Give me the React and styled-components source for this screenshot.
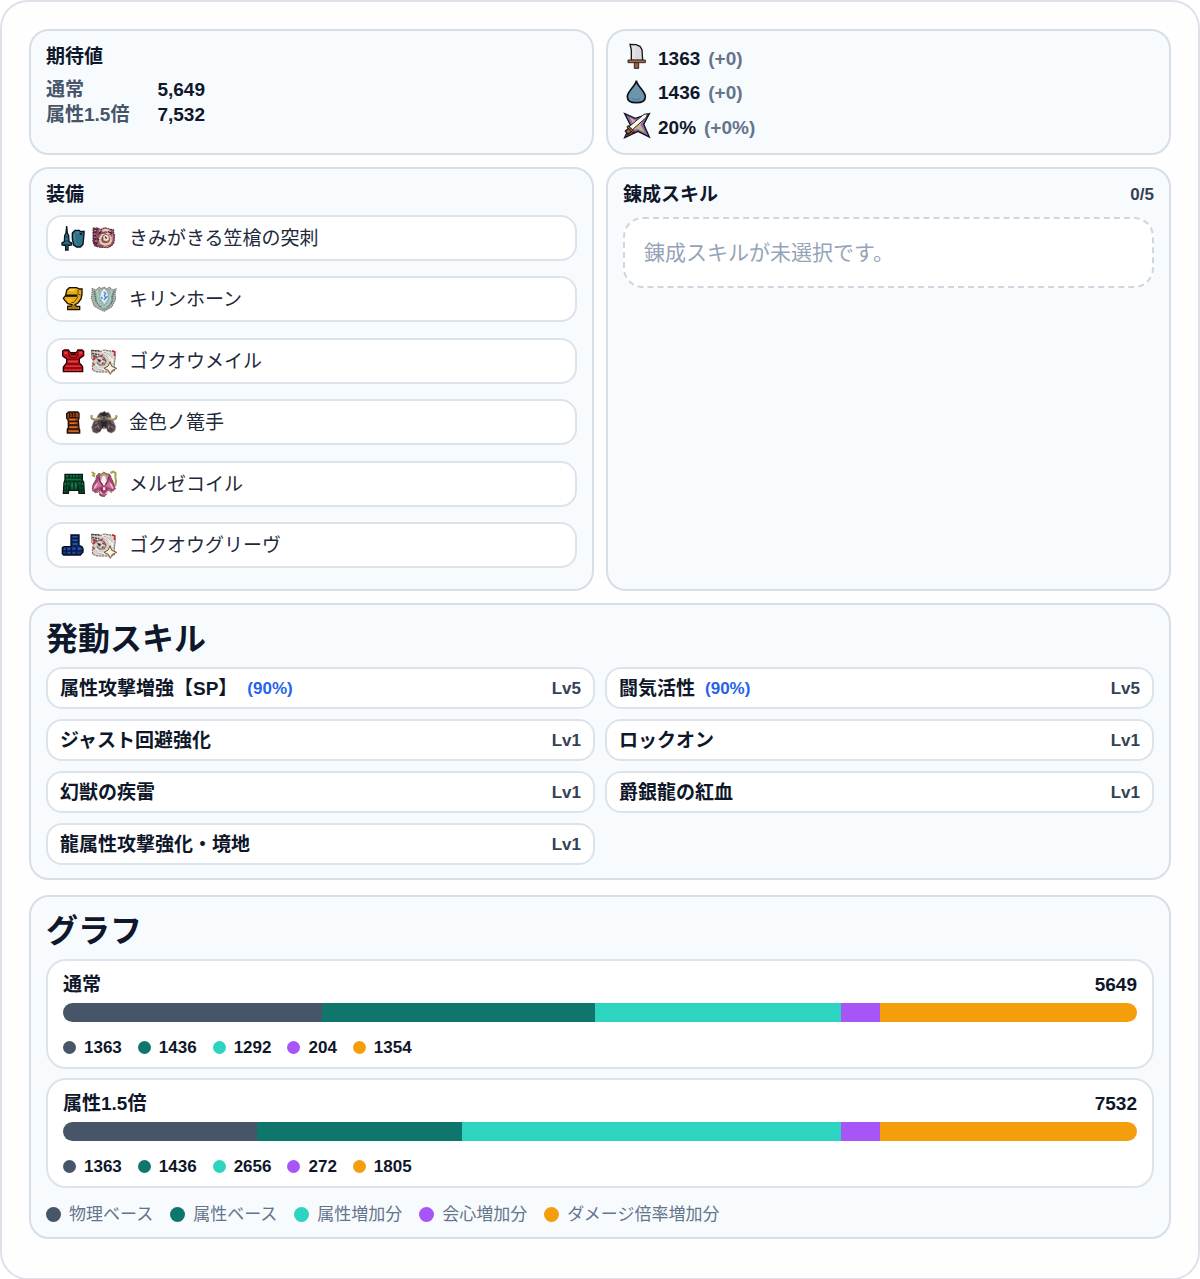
import React from 'react';
import styled, { createGlobalStyle } from 'styled-components';

const GlobalStyle = createGlobalStyle`
  * {
    box-sizing: border-box;
  }
  body {
    margin: 0;
    background: #fff;
    color: #0f172a;
    font-family: 'Liberation Sans', 'Noto Sans CJK JP', sans-serif;
    font-size: 19px;
    line-height: 25px;
  }
  h2, h3, ul, dl, dd, p {
    margin: 0;
    padding: 0;
  }
  ul {
    list-style: none;
  }
`;

const Root = styled.main`
  display: flex;
  flex-direction: column;
  gap: 12px;
  padding: 27px 27px 39px;
  border: 2px solid #dce2ea;
  border-radius: 28px;
  background: #fefeff;
`;

const Columns = styled.div`
  display: grid;
  grid-template-columns: 1fr 1fr;
  gap: 12px;
`;

const Panel = styled.section`
  padding: 13px 15px;
  border: 2px solid #d7dee8;
  border-radius: 20px;
  background: #f8fbfe;
`;

const GraphPanel = styled(Panel)`
  margin-top: 3px;
  padding-bottom: 10px;
`;

const PanelHeader = styled.div`
  display: flex;
  justify-content: space-between;
  align-items: center;
  margin-bottom: ${props => props.$gap || 8}px;
`;

const PanelTitle = styled.h3`
  font-size: 19px;
  line-height: 25px;
  font-weight: 700;
`;

const SectionTitle = styled.h2`
  margin-bottom: 7px;
  font-size: 32px;
  line-height: 42px;
  font-weight: 700;
`;

const Count = styled.span`
  font-size: 17px;
  font-weight: 700;
  color: #334155;
`;

const ExpectedList = styled.dl`
  display: grid;
  grid-template-columns: auto 1fr;
  column-gap: 28px;
  font-weight: 700;
  dt {
    color: #475569;
  }
`;

const StatList = styled.ul`
  display: flex;
  flex-direction: column;
  justify-content: space-between;
  min-height: 95px;
  margin-top: 1px;
`;

const StatRow = styled.li`
  display: flex;
  align-items: center;
  gap: 8px;
  font-weight: 700;
`;

const StatValue = styled.span`
  margin-left: 1px;
`;

const Diff = styled.span`
  color: #64748b;
`;

const Icon = styled.svg`
  flex: none;
  width: 26px;
  height: 26px;
  overflow: visible;
`;

const EquipList = styled.ul`
  display: flex;
  flex-direction: column;
  justify-content: space-between;
  min-height: 353px;
  margin-bottom: 8px;
`;

const EquipItem = styled.li`
  display: flex;
  align-items: center;
  gap: 5px;
  height: 46px;
  padding: 0 12px;
  border: 2px solid #dde3eb;
  border-radius: 16px;
  background: #fff;
  color: #1e293b;
`;

const EquipName = styled.span`
  margin-top: 1px;
  margin-left: 7px;
`;

const Empty = styled.p`
  padding: 21px 19px;
  border: 2px dashed #cfd6e0;
  border-radius: 20px;
  background: #fff;
  color: #94a3b8;
  font-size: 21px;
`;

const SkillGrid = styled.ul`
  display: grid;
  grid-template-columns: 1fr 1fr;
  gap: 10px;
`;

const SkillItem = styled.li`
  display: flex;
  align-items: center;
  height: 42px;
  padding: 0 12px;
  border: 2px solid #dde3eb;
  border-radius: 16px;
  background: #fff;
  font-weight: 700;
`;

const Rate = styled.span`
  margin-left: 10px;
  font-size: 17px;
  color: #2563eb;
`;

const Level = styled.span`
  margin-left: auto;
  font-size: 17px;
  color: #334155;
`;

const Cards = styled.div`
  display: flex;
  flex-direction: column;
  gap: 9px;
`;

const Card = styled.div`
  height: 110px;
  padding: 11px 15px;
  border: 2px solid #dde3eb;
  border-radius: 20px;
  background: #fff;
  font-weight: 700;
`;

const CardHeader = styled.div`
  display: flex;
  justify-content: space-between;
  margin-bottom: 6px;
`;

const Bar = styled.div`
  display: flex;
  height: 19px;
  margin-bottom: 13px;
  border-radius: 10px;
  overflow: hidden;
`;

const Segment = styled.div`
  background: ${props => props.$color};
`;

const Values = styled.ul`
  display: flex;
  gap: 16px;
  font-size: 17px;
`;

const Legend = styled(Values)`
  gap: 17px;
  margin-top: 14px;
  color: #64748b;
`;

const Entry = styled.li`
  display: flex;
  align-items: center;
  gap: 8px;
`;

const Dot = styled.span`
  width: ${props => props.$size}px;
  height: ${props => props.$size}px;
  border-radius: 50%;
  background: ${props => props.$color};
`;

const SwordIcon = () => (
  <Icon viewBox="69 79 78 78">
    <path d="M90 77l18 1 12 5 6 10 2 32H94V94z" fill="#d9dadd" stroke="#17171c" strokeWidth="4" />
    <path d="M97 82h10l-3 38h-7z" fill="#e4e4e6" />
    <path d="M103 131h13v18h-13z" fill="#936044" stroke="#38231a" strokeWidth="3" />
    <path d="M84 124h52v8H84z" fill="#a66b48" stroke="#38231a" strokeWidth="3" />
  </Icon>
);

const DropIcon = () => (
  <Icon viewBox="69 181 78 78">
    <path d="M109 183c2 16 27 32 27 48 0 13-13 18-27 18s-27-5-27-18c0-16 25-32 27-48z" fill="#6d95ae" stroke="#0d1218" strokeWidth="5" />
    <path d="M94 233q14 12 28-1l-3 7q-12 6-23-1z" fill="#4b7ba0" />
  </Icon>
);

const AffinityIcon = () => (
  <Icon viewBox="69 285 78 78">
    <path d="M74 284l32 14 42-14-17 32 17 38-34-17-40 19 17-38z" fill="#8b6ab2" stroke="#15131a" strokeWidth="4" />
    <path d="M89 295l20 11 25-10-13 21 14 24-23-12-22 6 10-19z" fill="#c9b579" />
    <path d="M86 324l46-38 11-2-5 12-43 38z" fill="#faf8f3" stroke="#24202a" strokeWidth="3" />
    <path d="M76 336l12-10 9 10-13 10z" fill="#a76b3a" stroke="#2a1910" strokeWidth="4" />
    <path d="M82 321l20 20" stroke="#2a1910" strokeWidth="8" />
    <path d="M84 323l16 16" stroke="#cf9c60" strokeWidth="3" />
  </Icon>
);

const LanceIcon = () => (
  <Icon viewBox="30 30 78 78">
    <path d="M50 33l2 21 4 8 1 18 8 4v6l-11 2v13h-7V92l-11-2v-6l7-4 1-18 4-8z" fill="#2e7289" stroke="#07131a" strokeWidth="4" />
    <path d="M44 78h14M46 66h9M38 88h25" stroke="#123b4c" strokeWidth="3" />
    <path d="M67 54l8-8h13l4 4 10-1v8l-3 31-8 8H80l-9-6-4-18z" fill="#2f7189" stroke="#07131a" strokeWidth="4" />
    <path d="M73 57l2 25 7 9M79 53h8" fill="none" stroke="#4b8ba1" strokeWidth="3" />
    <path d="M89 53l8 8M97 53l-8 7" stroke="#07131a" strokeWidth="3" />
  </Icon>
);

const HelmIcon = () => (
  <Icon viewBox="30 36 78 78">
    <path d="M50 49l8-8h22l8 4h8v16l-3 14-9 12-9 5 4 5h10v10H53V97l11-1 2-4-13-3-8-9-5-7 7-9z" fill="#e9aa17" stroke="#171104" strokeWidth="4" />
    <path d="M53 51l8-6h16l-6 6z" fill="#ffd04a" />
    <path d="M46 65h36" stroke="#171104" strokeWidth="7" />
    <path d="M84 48v13l8 2M84 68l-12 17-8 1" fill="none" stroke="#6d4a05" strokeWidth="3" />
    <path d="M50 75h18l-5 8h-6z" fill="#f8bc22" />
    <path d="M61 96h17M57 102h28" stroke="#704905" strokeWidth="3" />
  </Icon>
);

const MailIcon = () => (
  <Icon viewBox="30 33 78 78">
    <path d="M38 42l5-3h12l6 8h18l5-8h12l5 4v13l-9 6-4 3v13l6 6 4 6v14H40V90l5-6 5-6V65l-5-3-7-5z" fill="#cc151d" stroke="#290506" strokeWidth="4" />
    <path d="M57 42v15l6 5h14l6-5V42M50 67h38M49 81h41M42 93h55" fill="none" stroke="#720a0e" strokeWidth="4" />
    <path d="M62 52h16" stroke="#290506" strokeWidth="5" />
    <path d="M43 45h9v6h-9zM88 45h8v6h-8zM54 71h30v5H54zM48 86h42v3H48z" fill="#ee3c40" />
    <path d="M45 99h48" stroke="#ee3c40" strokeWidth="3" strokeDasharray="8 3" />
  </Icon>
);

const GauntletIcon = () => (
  <Icon viewBox="30 31 78 78">
    <path d="M50 45l6-5h27l4 4v15l-2 5 2 26 2 3v10H52V91l3-2V66l-5-8z" fill="#9c4317" stroke="#211008" strokeWidth="4" />
    <path d="M59 41v13M67 41v13M75 41v13M55 57h30M56 68h28M56 79h28M54 91h33" stroke="#2a140b" strokeWidth="4" />
    <path d="M58 61h18v4H58zM60 72h17v4H60zM58 84h22v4H58zM57 96h27v3H57z" fill="#dd722a" />
  </Icon>
);

const CoilIcon = () => (
  <Icon viewBox="30 33 78 78">
    <path d="M45 43h52v18l4 5 2 34H87l-2-22-2 13H60l-2-13-3 22H40l2-32 3-8z" fill="#0b5733" stroke="#071a12" strokeWidth="4" />
    <path d="M58 45v17M67 45v16M76 45v16M86 45v17M47 53h48M46 64h50M60 66v24M72 66v24M83 66v24M43 78h14M41 90h15M86 78h15M87 90h15M49 66v33M94 66v33" stroke="#082c1b" strokeWidth="3" />
    <path d="M49 46h5v4h-5zM61 46h4v4h-4zM70 46h4v4h-4zM80 46h4v4h-4zM50 58h42v2H50zM43 70h5v5h-5zM96 70h4v5h-4zM64 70h5v12h-5zM75 70h5v12h-5z" fill="#13804a" />
  </Icon>
);

const GreavesIcon = () => (
  <Icon viewBox="30 37 78 78">
    <path d="M63 46h24v31l9 4 3 6v10l-8 9H41l-4-4V84l5-3 21-1z" fill="#15357c" stroke="#050b1e" strokeWidth="4" />
    <path d="M65 56h20M65 67h20M65 79l18 1M49 83v21M64 83v21M79 82v22M39 94h57" fill="none" stroke="#06143b" strokeWidth="3" />
    <path d="M69 50h12v3H69zM70 60h11v4H70zM70 71h11v4H70zM42 85h4v6h-4zM53 85h7v5h-7zM68 84h7v5h-7zM84 84h8v6h-8zM53 98h7v3h-7zM69 98h6v3h-6z" fill="#2c5cb0" />
  </Icon>
);

const BeastIcon = () => (
  <Icon viewBox="123 30 78 78">
    <path d="M129 39h17l4 5 14-6 14 4 13 2v10l3 7-2 22-7 10-12 5-24-1-15-4-5-11z" fill="#8d5262" stroke="#4c2638" strokeWidth="3" strokeDasharray="6 2" />
    <path d="M131 41h13l-6 18 1 22 10 12-13-2-6-11z" fill="#552343" />
    <path d="M157 48q14-7 22 3l-9 8-14 2-7 11 4 12 12 5 14-4 6-12-6-9-9-1" fill="none" stroke="#edc9ad" strokeWidth="7" />
    <path d="M159 62l9-4 9 5 1 11-7 6-12-3z" fill="#f2e1d4" stroke="#6c3041" strokeWidth="2" />
    <path d="M132 47h7M132 57h5M132 67h5M134 78h6M142 90l8-4M150 43l-2 9M187 58v17M161 95l14-1" stroke="#c87f86" strokeWidth="4" />
    <path d="M146 56l7-6M174 50l12 5M165 65l5 6M141 70l6 5" stroke="#3e1734" strokeWidth="4" />
  </Icon>
);

const KirinIcon = () => (
  <Icon viewBox="123 36 78 78">
    <path d="M126 43l12 5 8-8 9 3 7-4 8 5 9-5 7 9 13-4-4 15 2 17-11 22-16 10-8 4-15-7-15-9-8-23 2-15z" fill="#a4b5ae" stroke="#706b62" strokeWidth="3" strokeDasharray="4 2" />
    <path d="M133 51l3 18 2 11 10 15 14 10M192 51l-6 18 1 13-10 13-13 10" fill="none" stroke="#596d69" strokeWidth="5" strokeDasharray="5 2" />
    <path d="M140 49l5 16-3 15 18 23M187 49l-7 18 2 12-17 24" fill="none" stroke="#a4d5cb" strokeWidth="5" strokeDasharray="9 2" />
    <path d="M162 42l11 13 3 17-13 20-14-20 3-17z" fill="#e8eef0" stroke="#7ba8bc" strokeWidth="3" strokeDasharray="6 2" />
    <path d="M161 54l6 4-4 6 4 8-5 6M153 69l5 5M173 67l-5 5" fill="none" stroke="#3e8dd2" strokeWidth="4" />
    <path d="M144 43l7 12M180 43l-8 10M127 67l8 6M196 70l-9 8M142 91l14 5M182 90l-12 8" stroke="#bb9f8c" strokeWidth="3" />
  </Icon>
);

const GokuoIcon = () => (
  <Icon viewBox="123 33 78 78">
    <path d="M125 40l10 2 8-2 7 4 12-5 12 2 20 2 2 17-3 22v20l-8 3h-44l-13-5-1-15 3-14-5-8z" fill="#d5d2cc" stroke="#6e625c" strokeWidth="3" strokeDasharray="7 2" />
    <path d="M124 40l25 2M126 49l22 4M128 58l10-4" stroke="#463c3c" strokeWidth="4" strokeDasharray="7 2" />
    <path d="M132 67l17-10 13 4 6 12-5 10-14 1-9-8" fill="none" stroke="#807b76" strokeWidth="4" />
    <path d="M157 43l17 6 13 18-1 10M163 52l12 11 3 9M137 84l9 12 18 3" fill="none" stroke="#f8f6f0" strokeWidth="6" />
    <path d="M161 45l15 6 11 13M157 51l14 7 5 13M136 86l10 11 16 4" fill="none" stroke="#8d8882" strokeWidth="2" />
    <path d="M142 67l11 3-5 6zM160 66l8 7" fill="#343134" stroke="#343134" strokeWidth="2" />
    <path d="M130 69l4-9 7-2M150 58l8-3M157 66l7 3M186 42l8 2v13M130 79l3 6M160 76l-3 5" fill="none" stroke="#c92734" strokeWidth="5" />
    <path d="M180 74l5 14 15 6-13 6-6 12-6-12-13-6 13-7z" fill="#fff4df" stroke="#755437" strokeWidth="3" />
  </Icon>
);

const GoldenIcon = () => (
  <Icon viewBox="123 31 78 78">
    <path d="M145 48l7-7 6 2 5-6 6 6 6-2 6 8 3 12 7 8 6 16-3 12-10 6-10-4-4-9-8-3-8 4-4 8-10 5-11-4-4-14 6-17 9-9z" fill="#554a4d" stroke="#8b8082" strokeWidth="2" />
    <path d="M143 64l10 3 3 20-6 12-11-3-7-11 4-12zM181 64l-10 3-2 20 5 12 11-3 6-11-3-12z" fill="#4a3d42" />
    <path d="M136 75l7-5M134 88l8-5M184 70l7 5M182 83l9 5M143 78l5 12M178 78l-4 12" stroke="#877479" strokeWidth="4" />
    <path d="M124 50l2 9 11 5 15-5M200 50l-3 9-11 5-14-5" fill="none" stroke="#8b8056" strokeWidth="7" />
    <path d="M125 51l3 7 10 3 13-4M199 51l-4 7-9 3-13-4" fill="none" stroke="#d5cc94" strokeWidth="3" />
    <path d="M151 45l11-5 11 5-5 7h-12z" fill="#29292d" />
    <path d="M153 65l9 4 9-4-2 19-7 7-7-7z" fill="#29232b" />
    <path d="M158 53l-3 10M166 53l3 10M159 86h6" stroke="#a09094" strokeWidth="3" />
  </Icon>
);

const MelzeIcon = () => (
  <Icon viewBox="123 33 78 78">
    <path d="M146 40l9 3 7-6 10 5 8 2 5 12 7 15 4 16-9 7-13-3-4 12-8 7-12-3-2-12-12 3-9-7 1-15 9-16 3-13z" fill="#a74574" stroke="#70445a" strokeWidth="3" strokeDasharray="6 2" />
    <path d="M148 48l-3 14-13 16-3 12 13-7 13-4zM173 48l5 14 11 16 3 12-13-7-13-4z" fill="#d0739c" />
    <path d="M151 42l10-3 12 4 4 15-6 15-8 3-11-7-4-12z" fill="#c796a8" />
    <path d="M125 36l8 5-4 5 6 4M181 39l9-4 7 5-1 10 2 14-2 14" fill="none" stroke="#aaa050" strokeWidth="6" />
    <path d="M145 41l8 4 8-8 8 6 7-1" fill="none" stroke="#928236" strokeWidth="4" />
    <path d="M158 48h7l5 15-5 13h-5l-8-10z" fill="#f7efe9" />
    <path d="M147 51l3 14 8 10M176 51l-3 14-7 10M153 83l4 10 9-1 4-9" fill="none" stroke="#792957" strokeWidth="4" />
    <path d="M141 71l-8 14M181 70l8 15M149 94l8 8M175 93l-8 9" stroke="#f1c5d1" strokeWidth="4" />
    <path d="M159 82h7v9h-7z" fill="#f7dfe2" />
    <path d="M147 89l-7 8M176 89l9 9M158 104h8" stroke="#a9905c" strokeWidth="4" />
  </Icon>
);

const stats = [
  { icon: SwordIcon, value: '1363', diff: '(+0)' },
  { icon: DropIcon, value: '1436', diff: '(+0)' },
  { icon: AffinityIcon, value: '20%', diff: '(+0%)' },
];

const equips = [
  { part: LanceIcon, monster: BeastIcon, name: 'きみがきる笠槍の突刺' },
  { part: HelmIcon, monster: KirinIcon, name: 'キリンホーン' },
  { part: MailIcon, monster: GokuoIcon, name: 'ゴクオウメイル' },
  { part: GauntletIcon, monster: GoldenIcon, name: '金色ノ篭手' },
  { part: CoilIcon, monster: MelzeIcon, name: 'メルゼコイル' },
  { part: GreavesIcon, monster: GokuoIcon, name: 'ゴクオウグリーヴ' },
];

const skills = [
  { name: '属性攻撃増強【SP】', rate: '(90%)', level: 5 },
  { name: '闘気活性', rate: '(90%)', level: 5 },
  { name: 'ジャスト回避強化', level: 1 },
  { name: 'ロックオン', level: 1 },
  { name: '幻獣の疾雷', level: 1 },
  { name: '爵銀龍の紅血', level: 1 },
  { name: '龍属性攻撃強化・境地', level: 1 },
];

const series = [
  { label: '物理ベース', color: '#475569' },
  { label: '属性ベース', color: '#0f766e' },
  { label: '属性増加分', color: '#2dd4bf' },
  { label: '会心増加分', color: '#a855f7' },
  { label: 'ダメージ倍率増加分', color: '#f59e0b' },
];

const graphs = [
  { label: '通常', total: 5649, values: [1363, 1436, 1292, 204, 1354] },
  { label: '属性1.5倍', total: 7532, values: [1363, 1436, 2656, 272, 1805] },
];

export default function App() {
  return (
    <Root>
      <GlobalStyle />
      <Columns>
        <Panel>
          <PanelHeader>
            <PanelTitle>期待値</PanelTitle>
          </PanelHeader>
          <ExpectedList>
            {graphs.map(({ label, total }) => (
              <React.Fragment key={label}>
                <dt>{label}</dt>
                <dd>{total.toLocaleString('en-US')}</dd>
              </React.Fragment>
            ))}
          </ExpectedList>
        </Panel>
        <Panel>
          <StatList>
            {stats.map(({ icon: StatIcon, value, diff }) => (
              <StatRow key={value}>
                <StatIcon />
                <StatValue>{value}</StatValue>
                <Diff>{diff}</Diff>
              </StatRow>
            ))}
          </StatList>
        </Panel>
        <Panel>
          <PanelHeader>
            <PanelTitle>装備</PanelTitle>
          </PanelHeader>
          <EquipList>
            {equips.map(({ part: PartIcon, monster: MonsterIcon, name }) => (
              <EquipItem key={name}>
                <PartIcon />
                <MonsterIcon />
                <EquipName>{name}</EquipName>
              </EquipItem>
            ))}
          </EquipList>
        </Panel>
        <Panel>
          <PanelHeader $gap={10}>
            <PanelTitle>錬成スキル</PanelTitle>
            <Count>0/5</Count>
          </PanelHeader>
          <Empty>錬成スキルが未選択です。</Empty>
        </Panel>
      </Columns>
      <Panel>
        <SectionTitle>発動スキル</SectionTitle>
        <SkillGrid>
          {skills.map(({ name, rate, level }) => (
            <SkillItem key={name}>
              <span>{name}</span>
              {rate && <Rate>{rate}</Rate>}
              <Level>Lv{level}</Level>
            </SkillItem>
          ))}
        </SkillGrid>
      </Panel>
      <GraphPanel>
        <SectionTitle>グラフ</SectionTitle>
        <Cards>
          {graphs.map(({ label, total, values }) => (
            <Card key={label}>
              <CardHeader>
                <span>{label}</span>
                <span>{total}</span>
              </CardHeader>
              <Bar>
                {values.map((value, i) => (
                  <Segment key={i} $color={series[i].color} style={{ flexGrow: value }} />
                ))}
              </Bar>
              <Values>
                {values.map((value, i) => (
                  <Entry key={i}>
                    <Dot $size={13} $color={series[i].color} />
                    {value}
                  </Entry>
                ))}
              </Values>
            </Card>
          ))}
        </Cards>
        <Legend>
          {series.map(({ label, color }) => (
            <Entry key={label}>
              <Dot $size={15} $color={color} />
              {label}
            </Entry>
          ))}
        </Legend>
      </GraphPanel>
    </Root>
  );
}
